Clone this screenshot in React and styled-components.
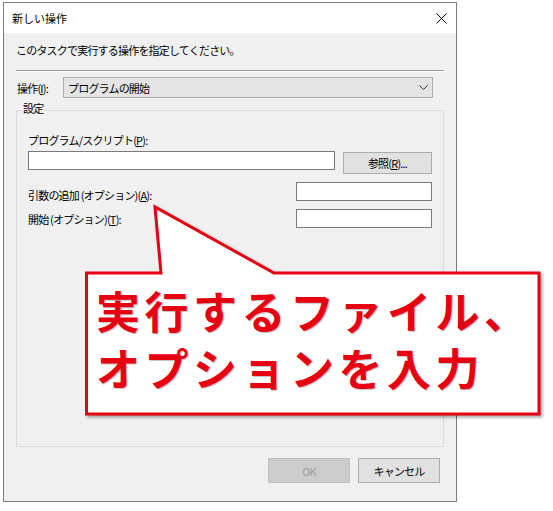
import React from "react";
import styled, { createGlobalStyle } from "styled-components";

const uiFont = `"Noto Sans CJK JP", "Noto Sans", sans-serif`;

const GlobalStyle = createGlobalStyle`
  html, body {
    margin: 0;
    padding: 0;
    background: #ffffff;
  }
  body {
    font-family: ${uiFont};
    font-size: 11px;
    color: #000;
  }
`;

const Page = styled.div`
  position: relative;
  width: 553px;
  height: 511px;
  padding: 2px 0 0 3px;
  box-sizing: border-box;
`;

/* dialog window */
const Dialog = styled.div`
  width: 454px;
  height: 500px;
  box-sizing: border-box;
  border: 1px solid #7c7c7c;
  display: flex;
  flex-direction: column;
  background: #f0f0f0;
`;

const TitleBar = styled.div`
  height: 30px;
  flex: none;
  background: #fff;
  display: flex;
  align-items: center;
  justify-content: space-between;
  padding: 0 9px 0 8px;
  font-size: 11px;
  letter-spacing: 0;
`;

const CloseIcon = styled.svg`
  width: 11px;
  height: 11px;
  display: block;
`;

const Body = styled.div`
  flex: 1;
  display: flex;
  flex-direction: column;
  padding: 9px 12px 0 12px;
  letter-spacing: -0.8px;
`;

const Text = styled.div`
  line-height: 16px;
  white-space: pre;
  padding-top: ${(p) => p.$drop || 0}px;
`;

const Separator = styled.div`
  margin-top: 12px;
  height: 0;
  border-top: 1px solid #a0a0a0;
  border-bottom: 1px solid #ffffff;
`;

const OpRow = styled.div`
  margin-top: 5px;
  display: flex;
  align-items: center;
`;

const OpLabel = styled.div`
  width: 46px;
  margin-left: 1px;
  line-height: 16px;
`;

const Select = styled.div`
  width: 370px;
  height: 21px;
  box-sizing: border-box;
  background: #e5e5e5;
  border: 1px solid #acacac;
  display: flex;
  align-items: center;
  justify-content: space-between;
  padding: 0 4px 0 4px;
`;

const Group = styled.fieldset`
  margin: 2px 0 0 0;
  height: 347px;
  box-sizing: border-box;
  border: 1px solid #dcdcdc;
  padding: 12px 11px 0 11px;
  min-width: 0;
`;

const Legend = styled.legend`
  margin-left: -6px;
  padding: 0 1px 4px;
  line-height: 16px;
`;

const FieldRow = styled.div`
  display: flex;
  align-items: flex-start;
  justify-content: space-between;
  margin-top: ${(p) => p.$gap}px;
`;

const TextBox = styled.div`
  width: ${(p) => p.$width}px;
  height: 19px;
  box-sizing: border-box;
  background: #fff;
  border: 1px solid #7a7a7a;
`;

const Button = styled.div`
  width: ${(p) => p.$width}px;
  height: ${(p) => p.$height}px;
  margin-top: ${(p) => p.$top || 0}px;
  box-sizing: border-box;
  display: flex;
  align-items: center;
  justify-content: center;
  background: ${(p) => (p.$disabled ? "#cccccc" : "#e1e1e1")};
  border: 1px solid ${(p) => (p.$disabled ? "#bfbfbf" : "#adadad")};
  color: ${(p) => (p.$disabled ? "#a0a0a0" : "#000")};
`;

const ButtonBar = styled.div`
  margin-top: 11px;
  display: flex;
  justify-content: flex-end;
  gap: 8px;
  padding-right: 4px;
`;

/* red speech bubble over the dialog */
const Callout = styled.div`
  position: absolute;
  left: 80px;
  top: 200px;
  width: 466px;
  height: 222px;
  box-sizing: border-box;
  padding: 82px 0 0 16px;
`;

const CalloutShape = styled.svg`
  position: absolute;
  inset: 0;
  width: 466px;
  height: 222px;
  filter: drop-shadow(2px 2px 1.5px rgba(0, 0, 0, 0.35));
`;

const CalloutLine = styled.div`
  position: relative;
  font-family: ${uiFont};
  font-weight: 700;
  font-size: 44px;
  line-height: 57px;
  height: 57px;
  letter-spacing: 4.5px;
  color: #e60012;
  text-shadow: 1px 1px 1px rgba(0, 0, 0, 0.25);
  white-space: nowrap;
`;

export default function App() {
  return (
    <Page>
      <GlobalStyle />
      <Dialog>
        <TitleBar>
          <span>新しい操作</span>
          <CloseIcon viewBox="0 0 11 11">
            <path d="M0.5 0.5 L10.5 10.5 M10.5 0.5 L0.5 10.5" stroke="#000" strokeWidth="1" fill="none" />
          </CloseIcon>
        </TitleBar>
        <Body>
          <Text>このタスクで実行する操作を指定してください。</Text>
          <Separator />
          <OpRow>
            <OpLabel>
              操作(<u>I</u>):
            </OpLabel>
            <Select>
              <span>プログラムの開始</span>
              <svg width="9" height="5" viewBox="0 0 9 5">
                <path d="M0.5 0.5 L4.5 4.5 L8.5 0.5" stroke="#333" strokeWidth="1" fill="none" />
              </svg>
            </Select>
          </OpRow>
          <Group>
            <Legend>設定</Legend>
            <Text>
              プログラム/スクリプト(<u>P</u>):
            </Text>
            <FieldRow $gap={3}>
              <TextBox $width={307} />
              <Button $width={89} $height={22} $top={1}>
                参照(<u>R</u>)...
              </Button>
            </FieldRow>
            <FieldRow $gap={8}>
              <Text $drop={5}>
                {"引数の追加 (オプション)("}<u>A</u>):
              </Text>
              <TextBox $width={136} />
            </FieldRow>
            <FieldRow $gap={6}>
              <Text $drop={2}>
                {"開始 (オプション)("}<u>T</u>):
              </Text>
              <TextBox $width={136} />
            </FieldRow>
          </Group>
          <ButtonBar>
            <Button $width={82} $height={25} $disabled>
              OK
            </Button>
            <Button $width={82} $height={25}>
              キャンセル
            </Button>
          </ButtonBar>
        </Body>
      </Dialog>
      <Callout>
        <CalloutShape viewBox="0 0 466 222">
          <path
            d="M6.5 73 L81 73 L75 7 L194 73 L459 73 L459 214 L6.5 214 Z"
            fill="#fff"
            stroke="#e50012"
            strokeWidth="3"
            strokeLinejoin="miter"
          />
        </CalloutShape>
        <CalloutLine>実行するファイル、</CalloutLine>
        <CalloutLine>オプションを入力</CalloutLine>
      </Callout>
    </Page>
  );
}
